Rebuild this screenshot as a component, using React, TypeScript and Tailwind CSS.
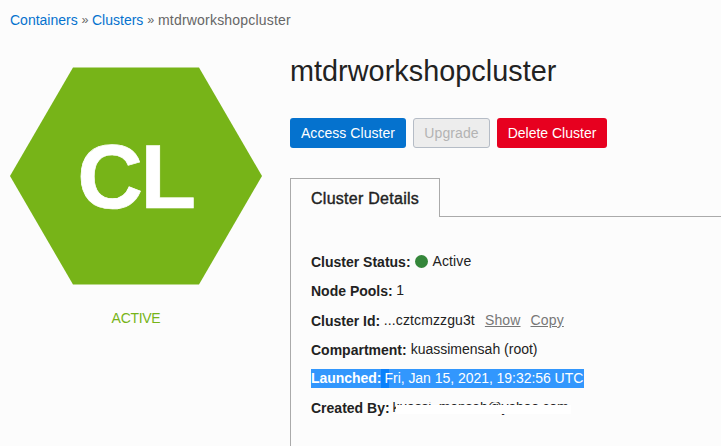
import type { ReactNode } from "react";

function Row({ label, children }: { label: string; children: ReactNode }) {
  return (
    <div className="flex h-[29.3px] items-start whitespace-nowrap">
      <span className="pt-px font-bold">{label}</span>
      {children}
    </div>
  );
}

export default function App() {
  return (
    <div className="h-[446px] w-[721px] overflow-hidden bg-[#fcfcfc] font-['Liberation_Sans',Arial,sans-serif] text-sm leading-5 text-[#222]">
      <nav className="flex h-[50px] pt-[10px] pl-[10px] text-[#666]">
        <a className="w-[68px] text-[#0572ce]">Containers</a>
        <span className="w-[14px] text-center text-[12.5px]">»</span>
        <a className="w-[51.5px] text-[#0572ce]">Clusters</a>
        <span className="w-[14.5px] text-center text-[12.5px]">»</span>
        <span className="tracking-[0.2px]">mtdrworkshopcluster</span>
      </nav>
      <div className="flex">
        <aside className="flex w-[290px] shrink-0 flex-col pt-[17px] pl-[10px] text-[#77b418]">
          <svg width="252" height="218" viewBox="0 0 252 218">
            <path d="M0 109 63 .5H189L252 109 189 217.5H63Z" fill="#77b418" />
            <text x="67.2" y="140.7" fill="white" fontSize="91" fontWeight="bold" letterSpacing="-2.5" stroke="white" strokeWidth="0.7">CL</text>
          </svg>
          <div className="w-[252px] pt-[23px] text-center tracking-[-0.3px]">ACTIVE</div>
        </aside>
        <main className="min-w-0 flex-1">
          <h1 className="h-[68px] text-[28.8px] leading-[42px] tracking-[0.04px]">mtdrworkshopcluster</h1>
          <div className="flex gap-[7px]">
            <button className="h-[30px] w-[116px] rounded-[3px] bg-[#0572ce] tracking-[0.05px] text-white">Access Cluster</button>
            <button className="h-[30px] w-[77px] rounded-[3px] border border-[#b5bcc6] bg-[#ededed] tracking-[0.1px] text-[#b3b3b3]">Upgrade</button>
            <button className="h-[30px] w-[110px] rounded-[3px] bg-[#e7001f] text-white">Delete Cluster</button>
          </div>
          <div className="mt-[30px] flex">
            <div className="h-[39px] w-[150px] border-t border-r border-l border-[#aaa] pt-[9px] pl-5 text-base leading-[22px]">
              <span className="tracking-[0.27px] [-webkit-text-stroke:0.4px_#222]">Cluster Details</span>
            </div>
            <div className="flex-1 border-b border-[#aaa]" />
          </div>
          <section className="h-[240px] border-l border-[#aaa] pt-[34px] pl-5">
            <Row label="Cluster Status:">
              <span className="mt-[3.5px] ml-[4px] size-[13px] rounded-full bg-[#34863a]" />
              <span className="ml-[5px] tracking-[0.1px]">Active</span>
            </Row>
            <Row label="Node Pools:"><span className="ml-[3.5px]">1</span></Row>
            <Row label="Cluster Id:">
              <span className="ml-[3.5px] tracking-[0.12px]">...cztcmzzgu3t</span>
              <a className="ml-[10px] tracking-[0.15px] text-[#777] underline">Show</a>
              <a className="ml-[10px] tracking-[0.15px] text-[#777] underline">Copy</a>
            </Row>
            <Row label="Compartment:"><span className="ml-1">kuassimensah (root)</span></Row>
            <Row label="">
              <span className="mt-px flex h-[19px] w-[273px] bg-[#3297fd] text-white">
                <span className="w-[70px] shrink-0 font-bold leading-[19px] tracking-[-0.05px]">Launched:</span>
                <span className="w-2 bg-[#0a80fb] pl-[3.5px] leading-[18px] tracking-[-0.04px]">Fri, Jan 15, 2021, 19:32:56 UTC</span>
              </span>
            </Row>
            <Row label="Created By:">
              <span className="relative ml-[3px] tracking-[-0.18px]">
                kuassi_mensah@yahoo.com
                <span className="absolute top-0 left-0 h-[4.5px] w-[180px] bg-[#fcfcfc]" />
                <span className="absolute top-[7.5px] left-[3px] h-[9px] w-[175px] bg-white" />
                <span className="absolute top-[16.5px] left-[3px] h-[3px] w-[102px] bg-[#fcfcfc]" />
              </span>
            </Row>
          </section>
        </main>
      </div>
    </div>
  );
}
